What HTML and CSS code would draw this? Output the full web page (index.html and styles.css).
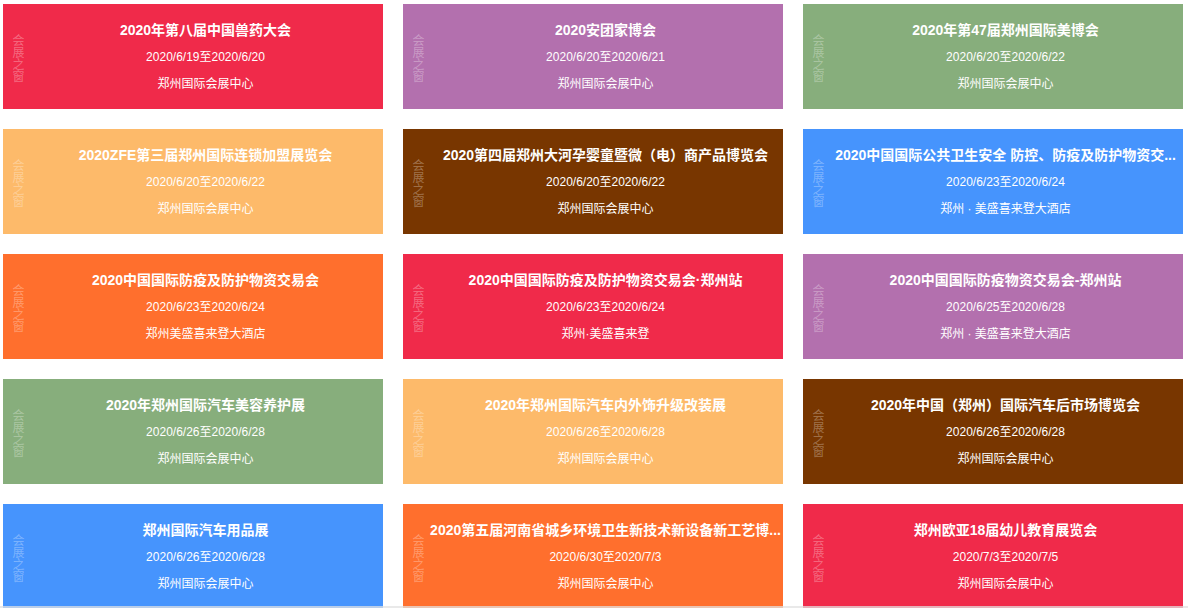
FILE: index.html
```html
<!DOCTYPE html>
<html lang="zh-CN">
<head>
<meta charset="utf-8">
<title>会展之窗</title>
<link rel="stylesheet" href="styles.css">
</head>
<body>
<div class="grid">
  <div class="card c-red"><div class="side">会展之窗</div><div class="body"><div class="title">2020年第八届中国兽药大会</div><div class="date">2020/6/19至2020/6/20</div><div class="place">郑州国际会展中心</div></div></div>
  <div class="card c-purple"><div class="side">会展之窗</div><div class="body"><div class="title">2020安团家博会</div><div class="date">2020/6/20至2020/6/21</div><div class="place">郑州国际会展中心</div></div></div>
  <div class="card c-green"><div class="side">会展之窗</div><div class="body"><div class="title">2020年第47届郑州国际美博会</div><div class="date">2020/6/20至2020/6/22</div><div class="place">郑州国际会展中心</div></div></div>

  <div class="card c-peach"><div class="side">会展之窗</div><div class="body"><div class="title">2020ZFE第三届郑州国际连锁加盟展览会</div><div class="date">2020/6/20至2020/6/22</div><div class="place">郑州国际会展中心</div></div></div>
  <div class="card c-brown"><div class="side">会展之窗</div><div class="body"><div class="title">2020第四届郑州大河孕婴童暨微（电）商产品博览会</div><div class="date">2020/6/20至2020/6/22</div><div class="place">郑州国际会展中心</div></div></div>
  <div class="card c-blue"><div class="side">会展之窗</div><div class="body"><div class="title">2020中国国际公共卫生安全 防控、防疫及防护物资交...</div><div class="date">2020/6/23至2020/6/24</div><div class="place">郑州 · 美盛喜来登大酒店</div></div></div>

  <div class="card c-orange"><div class="side">会展之窗</div><div class="body"><div class="title">2020中国国际防疫及防护物资交易会</div><div class="date">2020/6/23至2020/6/24</div><div class="place">郑州美盛喜来登大酒店</div></div></div>
  <div class="card c-red"><div class="side">会展之窗</div><div class="body"><div class="title">2020中国国际防疫及防护物资交易会·郑州站</div><div class="date">2020/6/23至2020/6/24</div><div class="place">郑州·美盛喜来登</div></div></div>
  <div class="card c-purple"><div class="side">会展之窗</div><div class="body"><div class="title">2020中国国际防疫物资交易会-郑州站</div><div class="date">2020/6/25至2020/6/28</div><div class="place">郑州 · 美盛喜来登大酒店</div></div></div>

  <div class="card c-green"><div class="side">会展之窗</div><div class="body"><div class="title">2020年郑州国际汽车美容养护展</div><div class="date">2020/6/26至2020/6/28</div><div class="place">郑州国际会展中心</div></div></div>
  <div class="card c-peach"><div class="side">会展之窗</div><div class="body"><div class="title">2020年郑州国际汽车内外饰升级改装展</div><div class="date">2020/6/26至2020/6/28</div><div class="place">郑州国际会展中心</div></div></div>
  <div class="card c-brown"><div class="side">会展之窗</div><div class="body"><div class="title">2020年中国（郑州）国际汽车后市场博览会</div><div class="date">2020/6/26至2020/6/28</div><div class="place">郑州国际会展中心</div></div></div>

  <div class="card c-blue"><div class="side">会展之窗</div><div class="body"><div class="title">郑州国际汽车用品展</div><div class="date">2020/6/26至2020/6/28</div><div class="place">郑州国际会展中心</div></div></div>
  <div class="card c-orange"><div class="side">会展之窗</div><div class="body"><div class="title">2020第五届河南省城乡环境卫生新技术新设备新工艺博...</div><div class="date">2020/6/30至2020/7/3</div><div class="place">郑州国际会展中心</div></div></div>
  <div class="card c-red"><div class="side">会展之窗</div><div class="body"><div class="title">郑州欧亚18届幼儿教育展览会</div><div class="date">2020/7/3至2020/7/5</div><div class="place">郑州国际会展中心</div></div></div>
</div>
<div class="bottom-line"></div>
</body>
</html>
```
FILE: styles.css
```css
html, body {
  margin: 0;
  padding: 0;
  background: #fff;
  font-family: "Liberation Sans", "Noto Sans CJK SC", sans-serif;
  color: #fff;
}

.grid {
  display: grid;
  grid-template-columns: repeat(3, 380px);
  grid-auto-rows: 105px;
  column-gap: 20px;
  row-gap: 20px;
  padding: 4px 0 0 3px;
}

.card {
  display: flex;
  height: 105px;
}

.c-red { background: #f02a4a; }
.c-purple { background: #b370ae; }
.c-green { background: #87ae7c; }
.c-peach { background: #fdba6a; }
.c-brown { background: #783600; }
.c-blue { background: #4694fd; }
.c-orange { background: #ff6f2d; }

.side {
  width: 12px;
  flex: none;
  padding: 30px 4px 0 9px;
  writing-mode: vertical-rl;
  font-family: "Noto Sans CJK SC", sans-serif;
  font-size: 12px;
  line-height: 12px;
  color: rgba(255, 255, 255, 0.3);
}

.body {
  flex: 1;
  min-width: 0;
  display: flex;
  flex-direction: column;
  align-items: center;
  padding-top: 16px;
}

.title {
  font-size: 14px;
  font-weight: bold;
  line-height: 21px;
  white-space: nowrap;
}

.date {
  margin-top: 7px;
  font-size: 12px;
  line-height: 19px;
  white-space: nowrap;
}

.place {
  margin-top: 8px;
  font-size: 12px;
  line-height: 19px;
  white-space: nowrap;
}

.bottom-line {
  position: fixed;
  left: 0;
  right: 0;
  bottom: 0;
  height: 2px;
  background: rgba(225, 225, 225, 0.75);
}
```
